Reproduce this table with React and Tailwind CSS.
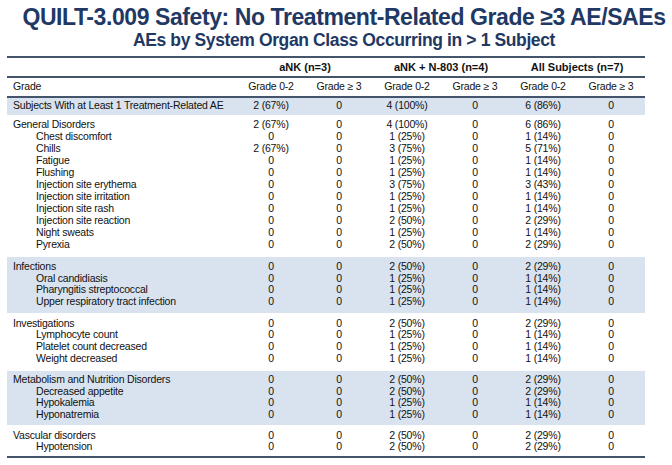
const groups = [
  {
    band: false,
    step: "h-[12px] leading-[12px]",
    pad: "pt-[3.5px] pb-[7px]",
    rows: [
      ["General Disorders", "2 (67%)", "0", "4 (100%)", "0", "6 (86%)", "0"],
      ["Chest discomfort", "0", "0", "1 (25%)", "0", "1 (14%)", "0"],
      ["Chills", "2 (67%)", "0", "3 (75%)", "0", "5 (71%)", "0"],
      ["Fatigue", "0", "0", "1 (25%)", "0", "1 (14%)", "0"],
      ["Flushing", "0", "0", "1 (25%)", "0", "1 (14%)", "0"],
      ["Injection site erythema", "0", "0", "3 (75%)", "0", "3 (43%)", "0"],
      ["Injection site irritation", "0", "0", "1 (25%)", "0", "1 (14%)", "0"],
      ["Injection site rash", "0", "0", "1 (25%)", "0", "1 (14%)", "0"],
      ["Injection site reaction", "0", "0", "2 (50%)", "0", "2 (29%)", "0"],
      ["Night sweats", "0", "0", "1 (25%)", "0", "1 (14%)", "0"],
      ["Pyrexia", "0", "0", "2 (50%)", "0", "2 (29%)", "0"],
    ],
  },
  {
    band: true,
    step: "h-[11.7px] leading-[11.7px]",
    pad: "pt-[4px] pb-[5.5px]",
    rows: [
      ["Infections", "0", "0", "2 (50%)", "0", "2 (29%)", "0"],
      ["Oral candidiasis", "0", "0", "1 (25%)", "0", "1 (14%)", "0"],
      ["Pharyngitis streptococcal", "0", "0", "1 (25%)", "0", "1 (14%)", "0"],
      ["Upper respiratory tract infection", "0", "0", "1 (25%)", "0", "1 (14%)", "0"],
    ],
  },
  {
    band: false,
    step: "h-[11.7px] leading-[11.7px]",
    pad: "pt-[4.5px] pb-[6px]",
    rows: [
      ["Investigations", "0", "0", "2 (50%)", "0", "2 (29%)", "0"],
      ["Lymphocyte count", "0", "0", "1 (25%)", "0", "1 (14%)", "0"],
      ["Platelet count decreased", "0", "0", "1 (25%)", "0", "1 (14%)", "0"],
      ["Weight decreased", "0", "0", "1 (25%)", "0", "1 (14%)", "0"],
    ],
  },
  {
    band: true,
    step: "h-[11.7px] leading-[11.7px]",
    pad: "pt-[3.5px] pb-[4px]",
    rows: [
      ["Metabolism and Nutrition Disorders", "0", "0", "2 (50%)", "0", "2 (29%)", "0"],
      ["Decreased appetite", "0", "0", "2 (50%)", "0", "2 (29%)", "0"],
      ["Hypokalemia", "0", "0", "1 (25%)", "0", "1 (14%)", "0"],
      ["Hyponatremia", "0", "0", "1 (25%)", "0", "1 (14%)", "0"],
    ],
  },
  {
    band: false,
    step: "h-[11.7px] leading-[11.7px]",
    pad: "pt-[5px] pb-[2.5px]",
    rows: [
      ["Vascular disorders", "0", "0", "2 (50%)", "0", "2 (29%)", "0"],
      ["Hypotension", "0", "0", "2 (50%)", "0", "2 (29%)", "0"],
    ],
  },
];

const grid = "grid grid-cols-[230px_repeat(6,68px)]";

function Row({ cells, indent, step }) {
  const [label, ...values] = cells;
  return (
    <div className={`${grid} ${step}`}>
      <span className={`whitespace-nowrap ${indent ? "pl-[29px]" : "pl-[6px]"}`}>{label}</span>
      {values.map((v, i) => (
        <span key={i} className="text-center whitespace-nowrap">{v}</span>
      ))}
    </div>
  );
}

export default function App() {
  return (
    <div className="w-[672px] h-[465px] bg-white overflow-hidden font-['Liberation_Sans',Arial,sans-serif]">
      <h1 className="pl-[16px] pt-[4px] text-center text-[23px] tracking-[-0.42px] leading-[26px] font-bold text-[#1f3864] whitespace-nowrap">
        QUILT-3.009 Safety: No Treatment-Related Grade ≥3 AE/SAEs
      </h1>
      <h2 className="pl-[16px] text-center text-[17.5px] tracking-[-0.38px] leading-[20px] font-bold text-[#1f3864] whitespace-nowrap">
        AEs by System Organ Class Occurring in &gt; 1 Subject
      </h2>

      <div className="ml-[7px] mt-[6px] w-[638px] text-[10.5px] tracking-[-0.2px] text-[#111]">
        <div className="h-[2px] bg-[#44546a]" />
        <div className={`${grid} h-[18px] items-center text-[11px] tracking-normal font-bold`}>
          <span />
          <span className="col-span-2 text-center">aNK (n=3)</span>
          <span className="col-span-2 text-center">aNK + N-803 (n=4)</span>
          <span className="col-span-2 text-center">All Subjects (n=7)</span>
        </div>
        <div className="h-[1.5px] bg-[#44546a]" />
        <div className={`${grid} h-[18px] items-center`}>
          <span className="pl-[6px]">Grade</span>
          {["Grade 0-2", "Grade ≥ 3", "Grade 0-2", "Grade ≥ 3", "Grade 0-2", "Grade ≥ 3"].map((g, i) => (
            <span key={i} className="text-center">{g}</span>
          ))}
        </div>
        <div className="h-[2px] bg-[#44546a]" />
        <div className={`${grid} h-[17px] items-center bg-[#d9e3ef]`}>
          <span className="pl-[6px] whitespace-nowrap">Subjects With at Least 1 Treatment-Related AE</span>
          {["2 (67%)", "0", "4 (100%)", "0", "6 (86%)", "0"].map((v, i) => (
            <span key={i} className="text-center">{v}</span>
          ))}
        </div>

        {groups.map((g, gi) => (
          <div key={gi} className={`${g.pad} ${g.band ? "bg-[#d9e3ef]" : ""}`}>
            {g.rows.map((r, ri) => (
              <Row key={ri} cells={r} indent={ri > 0} step={g.step} />
            ))}
          </div>
        ))}
        <div className="h-[2px] bg-[#44546a]" />
      </div>
    </div>
  );
}
